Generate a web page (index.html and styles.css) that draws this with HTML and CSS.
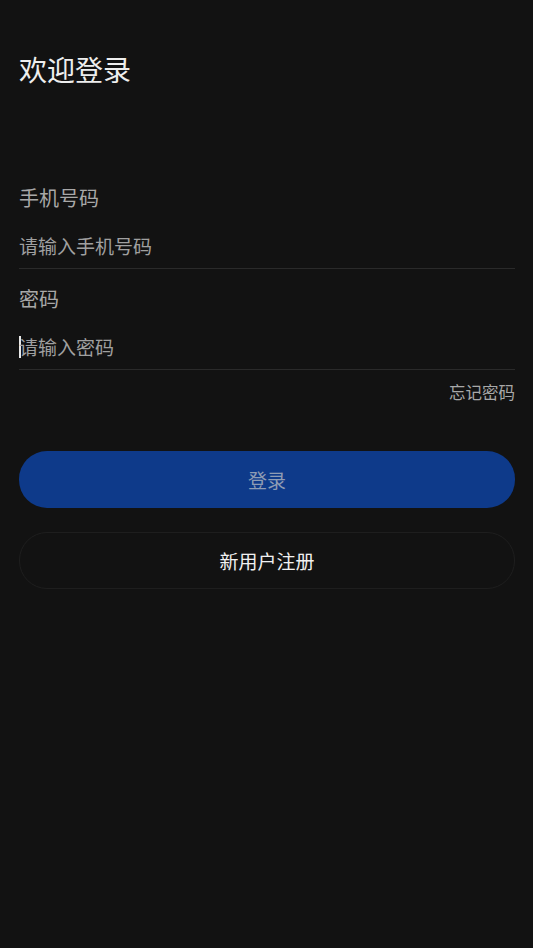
FILE: index.html
```html
<!DOCTYPE html>
<html lang="zh">
<head>
<meta charset="utf-8">
<link rel="stylesheet" href="styles.css">
</head>
<body>
<div class="page">
  <h1 class="title">欢迎登录</h1>
  <div class="form">
    <div class="field">
      <div class="label">手机号码</div>
      <div class="input"><span class="placeholder">请输入手机号码</span></div>
    </div>
    <div class="field">
      <div class="label">密码</div>
      <div class="input"><span class="cursor"></span><span class="placeholder">请输入密码</span></div>
    </div>
    <div class="forgot">忘记密码</div>
    <div class="btn btn-login">登录</div>
    <div class="btn btn-register">新用户注册</div>
  </div>
</div>
</body>
</html>
```
FILE: styles.css
```css
html, body {
  margin: 0;
  padding: 0;
  background: #121212;
  height: 100%;
}
body {
  font-family: "Noto Sans CJK SC", "Noto Sans", sans-serif;
}
.page {
  padding: 0 18px 0 19px;
}
.title {
  margin: 0;
  padding-top: 49px;
  font-size: 28px;
  font-weight: 400;
  line-height: 40px;
  color: #eeeeee;
}
.form {
  display: flex;
  flex-direction: column;
  margin-top: 95px;
}
.field {
  display: flex;
  flex-direction: column;
}
.label {
  font-size: 20px;
  line-height: 28px;
  color: #a8a8a8;
  height: 28px;
}
.input {
  display: flex;
  align-items: center;
  height: 44px;
  margin-top: 12px;
  border-bottom: 1px solid #2a2a2a;
  margin-bottom: 16px;
}
.placeholder {
  font-size: 19px;
  color: #a0a0a0;
  line-height: 26px;
}
.cursor {
  display: block;
  width: 1.5px;
  height: 22px;
  background: #e8e8e8;
  margin-right: -1.5px;
}
.field + .field .input {
  margin-bottom: 0;
}
.forgot {
  align-self: flex-end;
  font-size: 16.5px;
  line-height: 24px;
  color: #a8a8a8;
  margin-top: 10px;
}
.btn {
  display: flex;
  align-items: center;
  justify-content: center;
  height: 56px;
  border-radius: 28px;
  font-size: 19px;
  box-sizing: border-box;
}
.btn-login {
  margin-top: 47px;
  background: #0e3a8a;
  color: #8e9cb4;
  height: 57px;
}
.btn-register {
  margin-top: 24px;
  border: 1px solid #1e1e1e;
  color: #f0f0f0;
  height: 57px;
}
```
